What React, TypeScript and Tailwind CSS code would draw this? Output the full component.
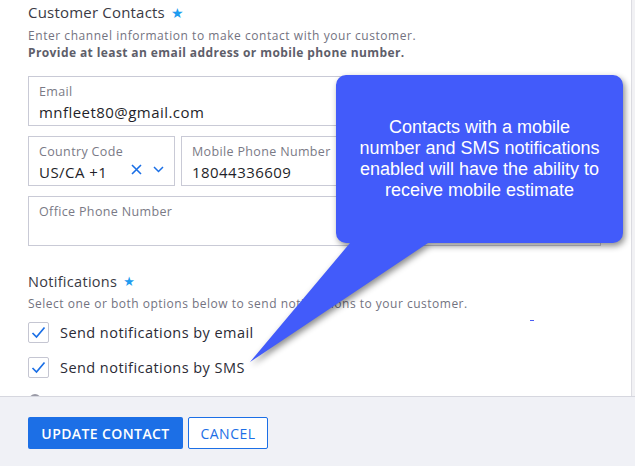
import React from "react";

const font = { fontFamily: '"Open Sans", "DejaVu Sans", sans-serif' };

function Field({
  label,
  value,
  className = "",
  children,
}: {
  label: string;
  value?: string;
  className?: string;
  children?: React.ReactNode;
}) {
  return (
    <div className={"relative h-[50px] border border-[#c9cad6] px-[10px] pt-[7px] " + className}>
      <div className="text-[12.5px] leading-[16px] text-[#7a7a86] tracking-[0.35px]">{label}</div>
      {value && <div className="mt-[3px] text-[15px] leading-[18px] text-[#1f1f2a] tracking-[0.45px]">{value}</div>}
      {children}
    </div>
  );
}

function Check({ label }: { label: string }) {
  return (
    <div className="flex items-center gap-[11px] h-[21px]">
      <div className="w-[21px] h-[21px] border border-[#c5c6d2] rounded-[2px] bg-white flex items-center justify-center">
        <svg width="15" height="13" viewBox="0 0 15 13">
          <path d="M1.5 7 L5.5 11 L13.5 1.5" fill="none" stroke="#1a6fe6" strokeWidth="1.7" />
        </svg>
      </div>
      <span className="text-[14.5px] text-[#2b2b36] tracking-[0.45px]">{label}</span>
    </div>
  );
}

export default function App() {
  return (
    <div className="relative w-[635px] h-[466px] flex flex-col bg-white overflow-hidden" style={font}>
      <div className="flex flex-1 min-h-0">
        {/* scrolling body */}
        <div className="flex-1 overflow-hidden pl-[28px] pr-[30px]">
          <div className="pt-[5px] flex items-center gap-[6px] h-[20px] text-[15px] text-[#3a3a44] tracking-[0.2px]">
            Customer Contacts <span className="text-[#1e9cf0] text-[14px]">★</span>
          </div>
          <p className="mt-[7px] text-[12px] leading-[17px] text-[#73737f] tracking-[0.55px]">
            Enter channel information to make contact with your customer.
            <br />
            <b className="font-bold text-[#5e5e6a] tracking-[0.4px]">Provide at least an email address or mobile phone number.</b>
          </p>

          <div className="mt-[15px] flex flex-col gap-[10px]">
            <Field label="Email" value="mnfleet80@gmail.com" />
            <div className="flex gap-[6px]">
              <Field label="Country Code" value="US/CA +1" className="w-[147px] shrink-0">
                <div className="absolute right-[10px] top-[27px] flex items-center gap-[11px]">
                  <svg width="11" height="11" viewBox="0 0 11 11">
                    <path d="M1 1 L10 10 M10 1 L1 10" stroke="#1a6fe6" strokeWidth="1.6" />
                  </svg>
                  <svg width="11" height="7" viewBox="0 0 11 7">
                    <path d="M1 1 L5.5 5.5 L10 1" fill="none" stroke="#1a6fe6" strokeWidth="1.5" />
                  </svg>
                </div>
              </Field>
              <Field label="Mobile Phone Number" value="18044336609" className="flex-1" />
            </div>
            <Field label="Office Phone Number" />
          </div>

          <div className="mt-[27px] flex items-center gap-[6px] h-[18px] text-[14.5px] text-[#3a3a44] tracking-[0.3px]">
            Notifications <span className="text-[#1e9cf0] text-[13px]">★</span>
          </div>
          <p className="mt-[5px] text-[12px] leading-[16px] text-[#73737f] tracking-[0.5px]">
            Select one or both options below to send notifications to your customer.
          </p>
          <div className="mt-[10px] flex flex-col gap-[14px]">
            <Check label="Send notifications by email" />
            <Check label="Send notifications by SMS" />
            <div className="ml-[1px] mt-[2px] w-[12px] h-[12px] rounded-full border-2 border-[#9a9aa6]" />
          </div>
        </div>
        {/* scrollbar */}
        <div className="w-[4px] border-l border-[#dcdce2] bg-[#f1f1f4]" />
      </div>

      <div className="h-[70px] shrink-0 border-t border-[#d6d7df] bg-[#f0f1f6] pl-[28px] pt-[20px] flex gap-[5px]">
        <button className="h-[32px] w-[155px] rounded-[2px] bg-[#1c6fe6] text-white text-[14px] font-semibold tracking-[0.4px]">
          UPDATE CONTACT
        </button>
        <button className="h-[32px] w-[80px] rounded-[2px] border border-[#1c6fe6] bg-white text-[#1c6fe6] text-[14px] tracking-[0.5px]">
          CANCEL
        </button>
      </div>

      {/* stray marker */}
      <div className="absolute left-[530px] top-[320px] w-[4px] h-[1px] bg-[#4a5cf5]" />

      {/* callout */}
      <svg
        className="absolute left-[240px] top-[70px] drop-shadow-[2px_3px_3px_rgba(0,0,0,0.45)]"
        width="400"
        height="300"
        viewBox="0 0 400 300"
      >
        <path
          d="M106 5 H373 A10 10 0 0 1 383 15 V163 A10 10 0 0 1 373 173 H188 L10 292 L110 173 H106 A10 10 0 0 1 96 163 V15 A10 10 0 0 1 106 5 Z"
          fill="#425bfa"
        />
      </svg>
      <div
        className="absolute left-[336px] top-[75px] w-[287px] h-[168px] flex flex-col items-center justify-center text-white text-[18px] leading-[21px] text-center"
        style={{ fontFamily: '"Liberation Sans", Arial, sans-serif' }}
      >
        <div className="whitespace-nowrap">Contacts with a mobile</div>
        <div className="whitespace-nowrap">number and SMS notifications</div>
        <div className="whitespace-nowrap">enabled will have the ability to</div>
        <div className="whitespace-nowrap">receive mobile estimate</div>
      </div>
    </div>
  );
}
